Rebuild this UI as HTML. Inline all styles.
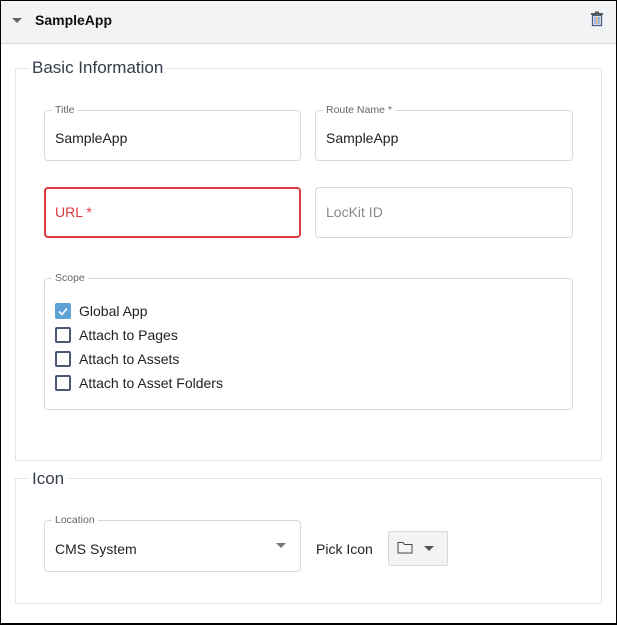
<!DOCTYPE html>
<html><head><style>
*{box-sizing:border-box;margin:0;padding:0}
body{width:617px;height:625px;background:#fff;font-family:"Liberation Sans",sans-serif;position:relative;overflow:hidden}
.a{position:absolute}
.frame{left:0;top:0;width:617px;height:625px;border:1px solid #000;border-bottom-width:2px}
.hdr{left:1px;top:1px;width:615px;height:43px;background:#f2f3f5;border-bottom:1px solid #d8dbe0}
.fs{border:1px solid #e4e6ea}
.lg{background:#fff;padding:0 3px;font-size:17px;color:#333d4a}
.in{border:1px solid #d6d9de;border-radius:4px}
.lab{background:#fff;padding:0 3px;font-size:10.5px;color:#666}
.v{font-size:14px;color:#222}
.cb{width:16px;height:16px;border:2px solid #4a5a75;border-radius:2px}
.ct{font-size:14px;color:#222}
</style></head><body>
<div class="a frame"></div>
<div class="a hdr"></div>
<div class="a" style="left:12px;top:18px;width:0;height:0;border-left:5px solid transparent;border-right:5px solid transparent;border-top:5px solid #666"></div>
<div class="a" style="left:35px;top:12px;font-size:14px;font-weight:bold;color:#111">SampleApp</div>
<svg class="a" style="left:590px;top:11px" width="14" height="16" viewBox="0 0 14 16"><rect x="1" y="2" width="12" height="2" fill="#555"/><rect x="5" y="0.5" width="4" height="2" fill="#555"/><rect x="2.5" y="4.5" width="9" height="10" fill="none" stroke="#4a5a80" stroke-width="1.3"/><line x1="5" y1="6" x2="5" y2="13" stroke="#3a7fd0" stroke-width="1"/><line x1="7" y1="6" x2="7" y2="13" stroke="#d08030" stroke-width="1"/><line x1="9" y1="6" x2="9" y2="13" stroke="#3a7fd0" stroke-width="1"/></svg>

<div class="a fs" style="left:15px;top:68px;width:587px;height:393px"></div>
<div class="a lg" style="left:29px;top:58px">Basic Information</div>

<div class="a in" style="left:44px;top:110px;width:257px;height:51px"></div>
<div class="a lab" style="left:52px;top:104px">Title</div>
<div class="a v" style="left:55px;top:130px">SampleApp</div>
<div class="a in" style="left:315px;top:110px;width:258px;height:51px"></div>
<div class="a lab" style="left:323px;top:104px">Route Name *</div>
<div class="a v" style="left:326px;top:130px">SampleApp</div>

<div class="a" style="left:44px;top:187px;width:257px;height:51px;border:2px solid #e0393e;border-radius:4px"></div>
<div class="a v" style="left:55px;top:204px;color:#e0393e">URL *</div>
<div class="a in" style="left:315px;top:187px;width:258px;height:51px"></div>
<div class="a v" style="left:326px;top:204px;color:#888">LocKit ID</div>

<div class="a in" style="left:44px;top:278px;width:529px;height:132px"></div>
<div class="a lab" style="left:52px;top:272px">Scope</div>
<div class="a cb" style="left:55px;top:303px;background:#5ea3d6;border-color:#5ea3d6"></div>
<svg class="a" style="left:55px;top:303px" width="16" height="16"><path d="M4 8.5l3 3 5-6" stroke="#fff" stroke-width="1.6" fill="none"/></svg>
<div class="a ct" style="left:79px;top:303px">Global App</div>
<div class="a cb" style="left:55px;top:327px"></div>
<div class="a ct" style="left:79px;top:327px">Attach to Pages</div>
<div class="a cb" style="left:55px;top:351px"></div>
<div class="a ct" style="left:79px;top:351px">Attach to Assets</div>
<div class="a cb" style="left:55px;top:375px"></div>
<div class="a ct" style="left:79px;top:375px">Attach to Asset Folders</div>

<div class="a fs" style="left:15px;top:478px;width:587px;height:126px"></div>
<div class="a lg" style="left:29px;top:469px">Icon</div>
<div class="a in" style="left:44px;top:520px;width:257px;height:52px"></div>
<div class="a lab" style="left:52px;top:514px">Location</div>
<div class="a v" style="left:55px;top:541px">CMS System</div>
<div class="a" style="left:276px;top:543px;border-left:5px solid transparent;border-right:5px solid transparent;border-top:5px solid #777"></div>
<div class="a v" style="left:316px;top:541px">Pick Icon</div>
<div class="a" style="left:388px;top:531px;width:60px;height:35px;background:#f2f3f5;border:1px solid #d6d9de;border-radius:2px"></div>
<svg class="a" style="left:397px;top:541px" width="16" height="13"><path d="M1 1.5h5l1.5 2h7.5v8.5h-14z" fill="none" stroke="#444" stroke-width="1"/></svg>
<div class="a" style="left:424px;top:546px;border-left:5px solid transparent;border-right:5px solid transparent;border-top:5px solid #555"></div>
</body></html>
